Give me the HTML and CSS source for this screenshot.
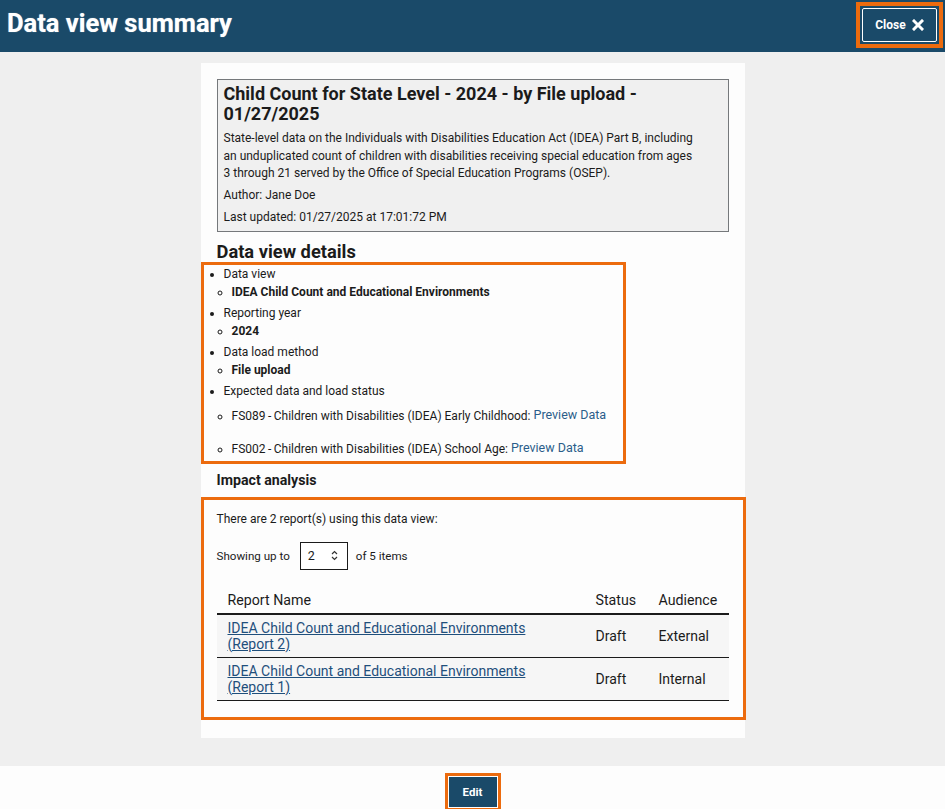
FILE: index.html
```
<!DOCTYPE html>
<html lang="en">

<head>
    <meta charset="UTF-8">
    <meta name="viewport" content="width=device-width, initial-scale=1.0">
    <title>Data view summary</title>
    <link rel="stylesheet" href="styles.css">
</head>

<body>
    <header class="page-header">
        <h1 class="page-title">Data view summary</h1>
        <span class="focus-ring focus-ring-lg">
            <button class="close-button">Close
                <svg width="12" height="12" viewBox="0 0 12 12">
                    <path d="M2 2 L10 10 M10 2 L2 10" stroke="#fff" stroke-width="3" stroke-linecap="square" />
                </svg>
            </button>
        </span>
    </header>

    <main class="page-body">
        <div class="panel">
            <div class="summary-box">
                <h2 class="summary-title">Child Count for State Level - 2024 - by File upload - 01/27/2025</h2>
                <p class="summary-desc">State-level data on the Individuals with Disabilities Education Act (IDEA)
                    Part B, including an unduplicated count of children with disabilities receiving special education
                    from ages 3 through 21 served by the Office of Special Education Programs (OSEP).</p>
                <p class="summary-meta">Author: Jane Doe</p>
                <p class="summary-meta">Last updated: 01/27/2025 at 17:01:72 PM</p>
            </div>

            <h3 class="section-title">Data view details</h3>
            <div class="details-box">
                <ul class="details-list">
                    <li>Data view
                        <ul class="sub-list">
                            <li><strong>IDEA Child Count and Educational Environments</strong></li>
                        </ul>
                    </li>
                    <li>Reporting year
                        <ul class="sub-list">
                            <li><strong>2024</strong></li>
                        </ul>
                    </li>
                    <li>Data load method
                        <ul class="sub-list">
                            <li><strong>File upload</strong></li>
                        </ul>
                    </li>
                    <li>Expected data and load status
                        <ul class="sub-list file-list">
                            <li>FS089&thinsp;-&thinsp;Children with Disabilities (IDEA) Early Childhood: <a href="#" class="preview-link">Preview Data</a></li>
                            <li>FS002&thinsp;-&thinsp;Children with Disabilities (IDEA) School Age: <a href="#" class="preview-link">Preview Data</a></li>
                        </ul>
                    </li>
                </ul>
            </div>

            <h4 class="impact-title">Impact analysis</h4>
            <div class="impact-box">
                <p class="impact-text">There are 2 report(s) using this data view:</p>
                <div class="paging-row">
                    <span>Showing up to</span>
                    <span class="number-box">2
                        <svg width="7" height="11" viewBox="0 0 7 11">
                            <path d="M1 4 L3.5 1.5 L6 4 M1 7 L3.5 9.5 L6 7" fill="none" stroke="#333" stroke-width="1.2" />
                        </svg>
                    </span>
                    <span>of 5 items</span>
                </div>
                <table class="report-table">
                    <thead>
                        <tr>
                            <th class="col-name">Report Name</th>
                            <th class="col-status">Status</th>
                            <th class="col-audience">Audience</th>
                        </tr>
                    </thead>
                    <tbody>
                        <tr>
                            <td><a href="#" class="report-link">IDEA Child Count and Educational Environments (Report 2)</a></td>
                            <td>Draft</td>
                            <td>External</td>
                        </tr>
                        <tr>
                            <td><a href="#" class="report-link">IDEA Child Count and Educational Environments (Report 1)</a></td>
                            <td>Draft</td>
                            <td>Internal</td>
                        </tr>
                    </tbody>
                </table>
            </div>
        </div>
    </main>

    <footer class="page-footer">
        <span class="focus-ring">
            <button class="edit-button">Edit</button>
        </span>
    </footer>
</body>

</html>
```

FILE: styles.css
```
body {
    margin: 0;
    background-color: #fdfdfd;
    font-family: Roboto, "Noto Sans", sans-serif;
    color: #1b1b1b;
}

p,
h1,
h2,
h3,
h4,
ul {
    margin: 0;
}

.page-header {
    height: 52px;
    background-color: #1a4a69;
    display: flex;
    align-items: flex-start;
    justify-content: space-between;
    padding: 0 2px 0 7px;
}

.page-title {
    color: #fff;
    font-size: 25.5px;
    font-weight: 700;
    line-height: 46px;
    text-shadow: 0 0 1px rgba(255, 255, 255, 0.6);
}

.focus-ring {
    display: inline-block;
    border: 3px solid #ec6b0e;
    padding: 1px;
    background-color: #fff;
}

.focus-ring-lg {
    margin-top: 2px;
    border-width: 4px;
    padding: 2px;
    background-color: transparent;
}

.close-button {
    display: flex;
    align-items: center;
    gap: 6px;
    width: 75px;
    height: 34px;
    justify-content: center;
    background-color: #1a4a69;
    border: 1px solid #fff;
    border-radius: 2px;
    color: #fff;
    font-family: Roboto, sans-serif;
    font-size: 12px;
    font-weight: 700;
    cursor: pointer;
}

.page-body {
    background-color: #efefef;
    padding: 11px 0 28px;
}

.panel {
    width: 544px;
    margin: 0 auto;
    background-color: #fdfdfd;
    padding: 16px 16px 18px;
    box-sizing: border-box;
}

.summary-box {
    background-color: #f0f0f0;
    border: 1px solid #75787b;
    padding: 4px 6px 5px;
}

.summary-title {
    font-size: 18px;
    line-height: 20px;
    font-weight: 700;
}

.summary-desc {
    margin-top: 6px;
    max-width: 475px;
    font-size: 12px;
    line-height: 17.5px;
}

.summary-meta {
    margin-top: 3px;
    font-size: 12px;
    line-height: 18px;
}

.summary-meta+.summary-meta {
    margin-top: 4px;
}

.section-title {
    margin-top: 10px;
    font-size: 18.3px;
    line-height: 20px;
    font-weight: 700;
}

.details-box {
    width: 425px;
    margin-left: -16px;
    box-sizing: border-box;
    border: 3px solid #ec6b0e;
}

.details-list {
    padding: 0 0 0 20px;
    font-size: 12px;
    line-height: 18px;
}

.details-list>li {
    margin-bottom: 3px;
}

.details-list>li:last-child {
    margin-bottom: 0;
}

.sub-list {
    padding-left: 8px;
    list-style-type: circle;
}

.file-list li {
    line-height: 24px;
    margin-top: 8px;
}

.file-list li:first-child {
    margin-top: 3px;
}

.preview-link {
    color: #2b5d8a;
    text-decoration: none;
    font-size: 12.5px;
    vertical-align: 1px;
}

.impact-title {
    margin: 7px 0 8px;
    font-size: 14.2px;
    line-height: 18px;
    font-weight: 700;
}

.impact-box {
    margin: 0 -17px 0 -16px;
    border: 3px solid #ec6b0e;
    padding: 11px 14px 16px 13px;
}

.impact-text {
    font-size: 12px;
    line-height: 16px;
}

.paging-row {
    display: flex;
    align-items: center;
    margin-top: 15px;
    font-size: 11.6px;
}

.number-box {
    display: flex;
    align-items: center;
    justify-content: space-between;
    width: 48px;
    height: 28px;
    box-sizing: border-box;
    border: 1px solid #1b1b1b;
    margin: 0 8px 0 10px;
    padding: 0 9px 0 7px;
    font-size: 12.5px;
    background-color: #fff;
}

.report-table {
    width: 100%;
    margin-top: 15px;
    border-collapse: collapse;
    font-size: 14px;
}

.report-table th {
    font-weight: 400;
    font-size: 14.2px;
    text-align: left;
    line-height: 16px;
    padding: 7px 11px 5px;
    border-bottom: 2px solid #1b1b1b;
}

.col-name {
    width: 346px;
}

.col-status {
    width: 41px;
}

.report-table td {
    line-height: 16px;
    padding: 5px 11px;
    background-color: #f6f6f6;
    border-bottom: 1px solid #1b1b1b;
}

.report-link {
    color: #1f4f7c;
}

.page-footer {
    height: 44px;
    display: flex;
    justify-content: center;
    align-items: flex-start;
    padding-top: 7px;
    box-sizing: border-box;
}

.edit-button {
    display: block;
    width: 48px;
    height: 30px;
    background-color: #1a4a69;
    border: none;
    color: #fff;
    font-family: Roboto, sans-serif;
    font-size: 11.5px;
    font-weight: 700;
    cursor: pointer;
}
```
